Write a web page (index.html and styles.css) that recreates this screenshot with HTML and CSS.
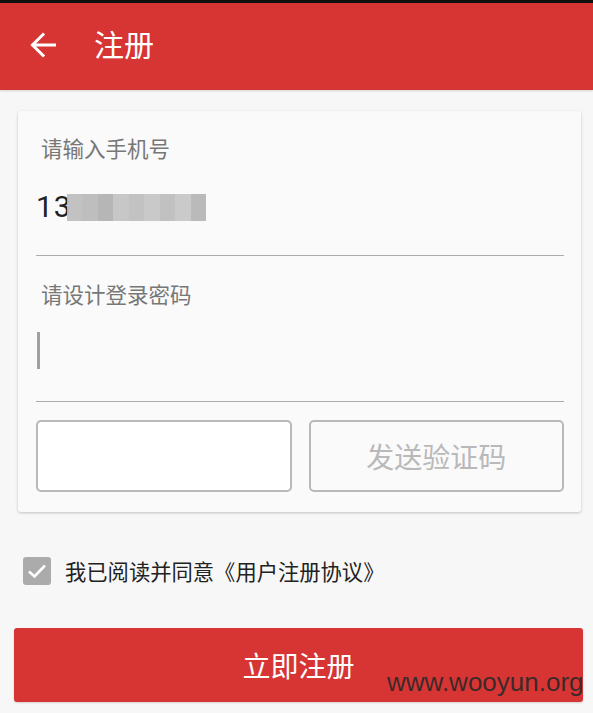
FILE: index.html
```html
<!DOCTYPE html>
<html lang="zh">
<head>
<meta charset="utf-8">
<title>注册</title>
<link rel="stylesheet" href="styles.css">
</head>
<body>
<div class="statusbar"></div>
<header class="appbar">
  <svg class="back" width="26" height="26" viewBox="0 0 26 26">
    <path d="M24.5 13H3M13 2.5L2.5 13L13 23.5" fill="none" stroke="#fff" stroke-width="3" stroke-linecap="square"/>
  </svg>
  <h1 class="title">注册</h1>
</header>
<main class="content">
  <section class="card">
    <div class="field">
      <div class="label">请输入手机号</div>
      <div class="value">
        <span class="digits">13</span>
        <span class="blur">
          <span class="px" style="background:#bdbdbd"></span>
          <span class="px" style="background:#b8b8b8"></span>
          <span class="px" style="background:#b0b0b0"></span>
          <span class="px" style="background:#c2c2c2"></span>
          <span class="px" style="background:#bdbdbd"></span>
          <span class="px" style="background:#c4c4c4"></span>
          <span class="px" style="background:#bcbcbc"></span>
          <span class="px" style="background:#c6c6c6"></span>
          <span class="px" style="background:#b4b4b4"></span>
        </span>
      </div>
    </div>
    <div class="field">
      <div class="label">请设计登录密码</div>
      <div class="value"><span class="cursor"></span></div>
    </div>
    <div class="code-row">
      <div class="code-input"></div>
      <div class="code-btn">发送验证码</div>
    </div>
  </section>
  <label class="agree">
    <span class="check">
      <svg width="20" height="16" viewBox="0 0 20 16"><path d="M2 8.5L7.5 13.5L18 2.5" fill="none" stroke="#fff" stroke-width="2.6"/></svg>
    </span>
    <span class="agree-text">我已阅读并同意《用户注册协议》</span>
  </label>
  <div class="submit">立即注册</div>
</main>
<div class="watermark">www.wooyun.org</div>
</body>
</html>
```
FILE: styles.css
```css
* { box-sizing: border-box; }
html, body { margin: 0; padding: 0; }
body {
  width: 593px;
  height: 713px;
  overflow: hidden;
  background: #f7f7f7;
  font-family: "Noto Sans CJK SC", "Noto Sans", Roboto, sans-serif;
  position: relative;
}
.statusbar { height: 3px; background: #111; }
.appbar {
  height: 87px;
  background: #d63533;
  display: flex;
  align-items: center;
  padding-left: 30px;
  box-shadow: 0 1px 2px rgba(0,0,0,0.15);
}
.back { display: block; margin-top: -4px; }
.title {
  margin: 0 0 0 38px;
  color: #fff;
  font-size: 30px;
  font-weight: 400;
  line-height: 1;
  margin-top: -8px;
}
.content { padding: 21px 10px 0 14px; }
.card {
  margin-left: 4px;
  margin-right: 2px;
  background: #fafafa;
  border-radius: 3px;
  box-shadow: 0 1px 3px rgba(0,0,0,0.22);
  padding: 23px 17px 19px 18px;
  height: 401px;
}
.field { border-bottom: 1.5px solid #ababab; height: 146px; }
.field:first-child { height: 122px; }
.field:nth-child(2) { padding-top: 24px; }
.label {
  color: #777;
  font-size: 21.5px;
  line-height: 28px;
  padding-left: 5px;
}
.value {
  margin-top: 27px;
  display: flex;
  align-items: center;
  height: 30px;
}
.digits {
  color: #222;
  font-size: 30px;
  line-height: 30px;
  font-family: Roboto, sans-serif;
  margin-top: 6px;
  letter-spacing: 1px;
}
.blur { display: flex; height: 27px; margin-left: -5px; margin-top: 6px; }
.px { width: 15.5px; height: 27px; display: block; opacity: 0.92; }
.cursor {
  display: block;
  width: 3px;
  height: 37px;
  background: #a0a0a0;
  margin-top: 0;
  margin-left: 1px;
}
.code-row {
  display: flex;
  gap: 17px;
  margin-top: 18px;
}
.code-input, .code-btn {
  flex: 1;
  height: 72px;
  border: 2px solid #b9b9b9;
  border-radius: 5px;
}
.code-input { background: #fff; }
.code-btn {
  background: #fafafa;
  color: #b9b9b9;
  font-size: 28px;
  display: flex;
  align-items: center;
  justify-content: center;
}
.agree {
  display: flex;
  align-items: center;
  margin-top: 45px;
  margin-left: 9px;
}
.check {
  width: 28px;
  height: 28px;
  border-radius: 3px;
  background: #ababab;
  display: flex;
  align-items: center;
  justify-content: center;
}
.agree-text {
  margin-left: 14px;
  font-size: 21.3px;
  color: #222;
  line-height: 28px;
}
.submit {
  margin-top: 43px;
  height: 74px;
  background: #d63533;
  border-radius: 3px;
  color: #fff;
  font-size: 28px;
  display: flex;
  align-items: center;
  justify-content: center;
  box-shadow: 0 1px 2px rgba(0,0,0,0.15);
}
.watermark {
  position: absolute;
  left: 387px;
  top: 667px;
  font-family: "Liberation Sans", Arial, sans-serif;
  font-size: 26px;
  color: rgba(40,40,40,0.9);
}
```
